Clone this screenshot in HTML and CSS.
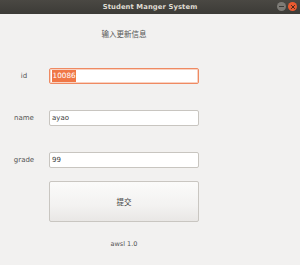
FILE: index.html
```html
<!DOCTYPE html>
<html>
<head>
<meta charset="utf-8">
<link rel="stylesheet" href="styles.css">
</head>
<body>
<div class="window">
  <div class="titlebar">
    <span class="title">Student Manger System</span>
    <div class="controls">
      <span class="btn min"><span class="bar"></span></span>
      <span class="btn close">
        <svg width="6" height="6" viewBox="0 0 6 6"><path d="M1.4 1.4 L4.6 4.6 M4.6 1.4 L1.4 4.6" stroke="#4a2a1c" stroke-width="1" stroke-linecap="round"/></svg>
      </span>
    </div>
  </div>
  <div class="content">
    <div class="heading">输入更新信息</div>
    <div class="row first">
      <span class="label">id</span>
      <div class="field focus"><span class="sel">10086</span></div>
    </div>
    <div class="row">
      <span class="label">name</span>
      <div class="field">ayao</div>
    </div>
    <div class="row">
      <span class="label">grade</span>
      <div class="field">99</div>
    </div>
    <div class="row btnrow">
      <span class="label"></span>
      <div class="submit">提交</div>
    </div>
    <div class="footer">awsl 1.0</div>
  </div>
</div>
</body>
</html>
```
FILE: styles.css
```css
html, body {
  margin: 0;
  padding: 0;
  width: 300px;
  height: 265px;
  overflow: hidden;
  background: #f2f1f0;
  font-family: "DejaVu Sans", "Noto Sans CJK SC", sans-serif;
}
.window {
  width: 300px;
  height: 265px;
  display: flex;
  flex-direction: column;
}
.titlebar {
  height: 14px;
  background: linear-gradient(#4a4843, #3c3b37);
  display: flex;
  align-items: center;
  justify-content: center;
  position: relative;
}
.title {
  color: #dfdbd2;
  font-size: 6.8px;
  font-weight: bold;
  letter-spacing: 0.1px;
}
.controls {
  position: absolute;
  right: 3px;
  top: 2px;
  display: flex;
  gap: 2px;
}
.btn {
  width: 9px;
  height: 9px;
  border-radius: 50%;
  display: flex;
  align-items: center;
  justify-content: center;
}
.min {
  background: #7d7b76;
}
.min .bar {
  width: 5px;
  height: 1px;
  background: #3c3b37;
}
.close {
  background: #ea5a30;
}
.content {
  display: flex;
  flex-direction: column;
  color: #4a4a4a;
}
.heading {
  margin-top: 15px;
  margin-left: 49px;
  width: 150px;
  text-align: center;
  font-size: 7.5px;
  line-height: 12px;
  height: 12px;
  color: #555;
}
.row {
  display: flex;
  align-items: center;
  margin-top: 26px;
  height: 16px;
}
.row.first {
  margin-top: 27px;
}
.label {
  width: 48px;
  text-align: center;
  font-size: 7px;
  color: #555;
}
.field {
  width: 150px;
  height: 16px;
  box-sizing: border-box;
  background: #fff;
  border: 1px solid #c8c5c0;
  border-radius: 2px;
  font-size: 7px;
  line-height: 14px;
  padding-left: 2px;
  color: #3c3c3c;
  margin-left: 1px;
}
.field.focus {
  border-color: #ef8a62;
  box-shadow: inset 0 0 0 1px #f9d2c2;
}
.sel {
  background: #f07746;
  color: #fff;
  display: inline-block;
  font-size: 7.3px;
  line-height: 12px;
  padding: 0 0.5px;
}
.btnrow {
  margin-top: 13px;
  height: 41px;
}
.submit {
  width: 150px;
  height: 41px;
  box-sizing: border-box;
  margin-left: 1px;
  border: 1px solid #c9c6c1;
  border-radius: 2px;
  background: linear-gradient(#fbfbfa, #f3f2f1 60%, #e9e7e5);
  display: flex;
  align-items: center;
  justify-content: center;
  font-size: 7.5px;
  color: #444;
}
.footer {
  margin-top: 16px;
  margin-left: 49px;
  width: 150px;
  text-align: center;
  font-size: 6.5px;
  line-height: 12px;
  color: #555;
}
```
